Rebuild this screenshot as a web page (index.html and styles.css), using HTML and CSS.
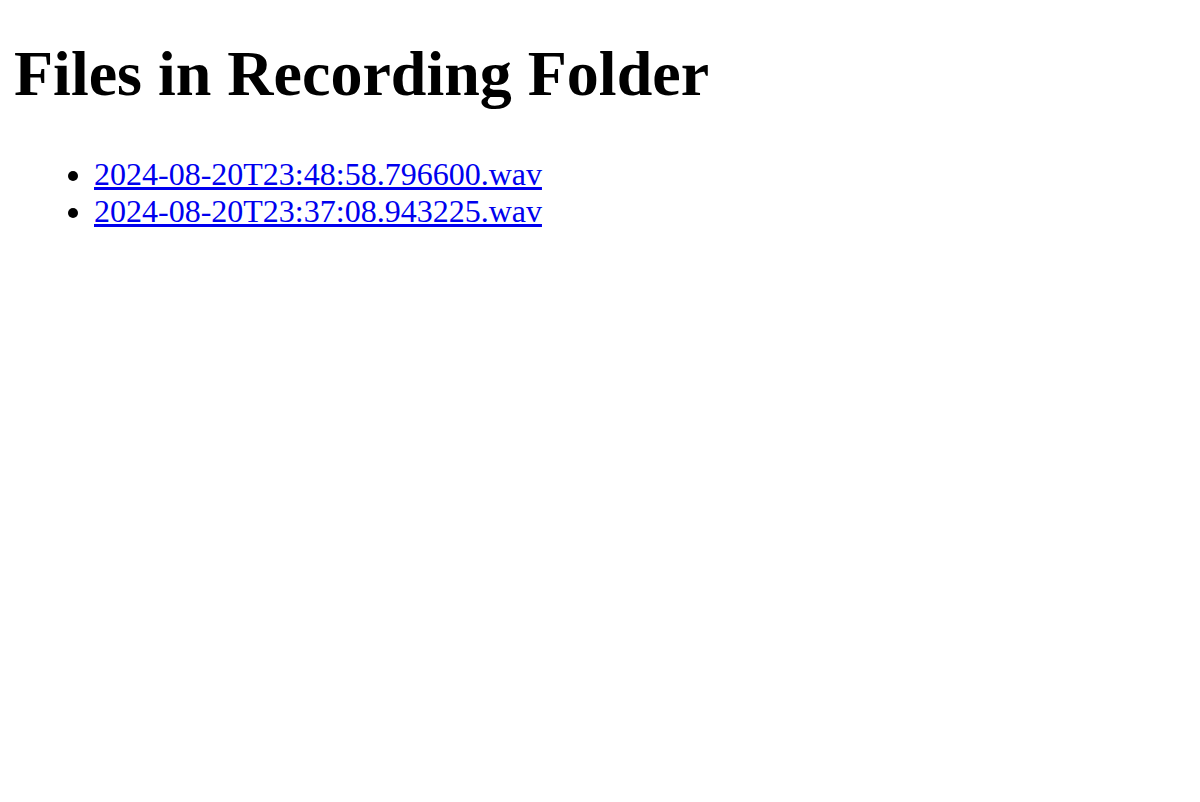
FILE: index.html
```html
<!DOCTYPE html>
<html>
<head>
<meta charset="utf-8">
<title>Files in Recording Folder</title>
<link rel="stylesheet" href="styles.css">
</head>
<body>
<h1 class="title">Files in Recording Folder</h1>
<ul class="files">
<li><a href="#">2024-08-20T23:48:58.796600.wav</a></li>
<li><a href="#">2024-08-20T23:37:08.943225.wav</a></li>
</ul>
</body>
</html>
```

FILE: styles.css
```css
html, body {
  background: #ffffff;
}
body {
  margin: 0 14px;
  padding-top: 1px;
  font-family: "Liberation Serif", "Times New Roman", serif;
  font-size: 32px;
  color: #000000;
}
.title {
  font-size: 64px;
  font-weight: bold;
  margin: 36px 0 45px;
}
.files {
  margin: 32px 0;
  padding-left: 80px;
}
.files a {
  color: #0000ee;
}
```
